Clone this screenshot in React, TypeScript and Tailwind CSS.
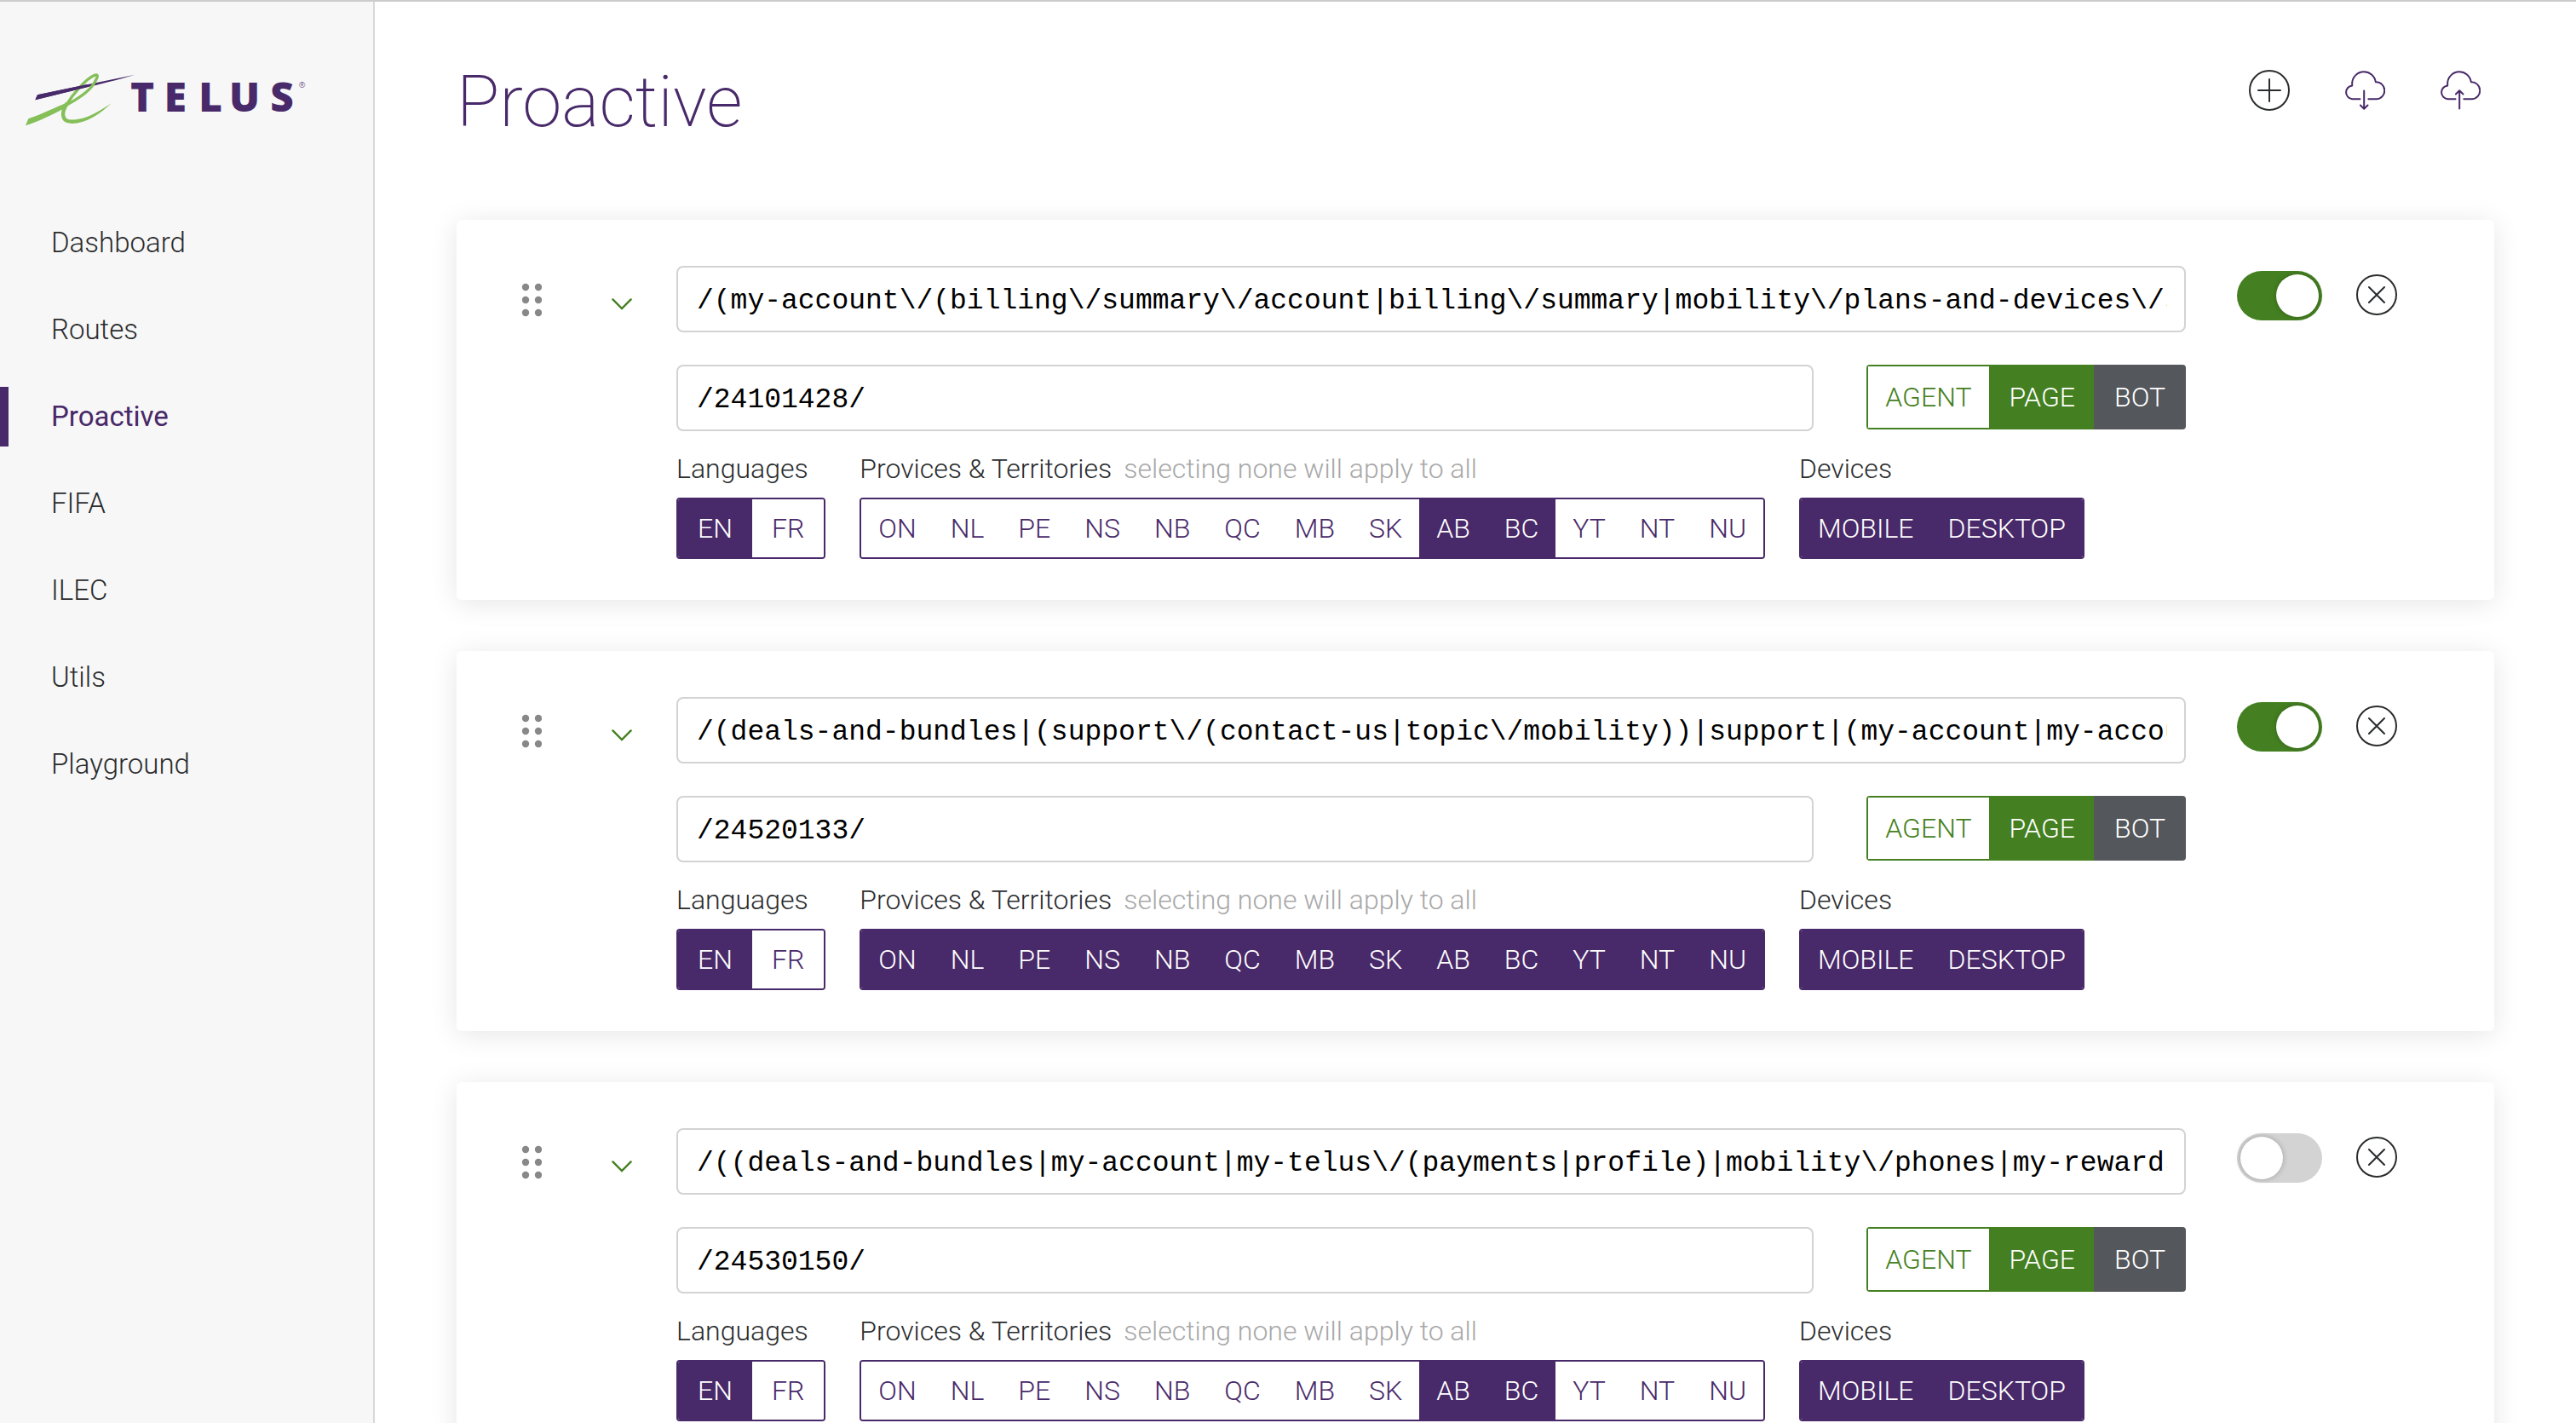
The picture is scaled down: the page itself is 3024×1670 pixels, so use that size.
import { useState } from "react";

type Rule = {
  id: string;
  pattern: string;
  engagement: string;
  provinces: string[];
  enabled: boolean;
};

const NAV = ["Dashboard", "Routes", "Proactive", "FIFA", "ILEC", "Utils", "Playground"];
const LANGUAGES = ["EN", "FR"];
const PROVINCES = ["ON", "NL", "PE", "NS", "NB", "QC", "MB", "SK", "AB", "BC", "YT", "NT", "NU"];
const DEVICES = ["MOBILE", "DESKTOP"];

const RULES: Rule[] = [
  {
    id: "rule-1",
    pattern:
      "/(my-account\\/(billing\\/summary\\/account|billing\\/summary|mobility\\/plans-and-devices\\/summary))/",
    engagement: "/24101428/",
    provinces: ["AB", "BC"],
    enabled: true,
  },
  {
    id: "rule-2",
    pattern:
      "/(deals-and-bundles|(support\\/(contact-us|topic\\/mobility))|support|(my-account|my-account\\/profile))/",
    engagement: "/24520133/",
    provinces: PROVINCES,
    enabled: true,
  },
  {
    id: "rule-3",
    pattern:
      "/((deals-and-bundles|my-account|my-telus\\/(payments|profile)|mobility\\/phones|my-rewards|support))/",
    engagement: "/24530150/",
    provinces: ["AB", "BC"],
    enabled: false,
  },
];

function TelusLogo() {
  return (
    <svg viewBox="0 0 1020 216" className="h-[72px] w-[340px]" role="img" aria-label="TELUS">
      <path d="M52 112 L60 94 L403 23 C340 42 280 56 235 67 Z" fill="#482969" />
      <g fill="none" stroke="#84bf58" strokeLinecap="round" strokeLinejoin="round">
        <path d="M150 136 C196 112 236 88 256 58 C274 30 276 20 261 25 C230 38 184 92 163 128" strokeWidth="10" />
        <path d="M163 126 C142 160 146 190 182 188" strokeWidth="13" />
      </g>
      <path d="M18 202 L28 178 C80 160 120 140 164 121 L166 134 C120 162 60 188 18 202 Z" fill="#84bf58" />
      <path d="M178 182 C230 184 280 150 320 124 C280 162 230 196 178 195 Z" fill="#84bf58" />
      <path d="M52 112 L60 94 L235 57 V67 Z" fill="#482969" />
      <text
        x="387 506 628 735 880"
        y="153"
        fill="#482969"
        className="font-['Noto_Sans'] text-[143px] font-black"
      >
        TELUS
      </text>
      <text x="980" y="70" fill="#482969" className="font-['Open_Sans'] text-[28px]">
        ®
      </text>
    </svg>
  );
}

function PlusCircle() {
  return (
    <svg viewBox="0 0 48 48" className="size-12" fill="none" stroke="#2a2c2e" strokeWidth="2" strokeLinecap="round">
      <circle cx="24" cy="24" r="23" />
      <path d="M24 11v26M11 24h26" />
    </svg>
  );
}

function CloseCircle() {
  return (
    <svg viewBox="0 0 48 48" className="size-12" fill="none" stroke="#2a2c2e" strokeWidth="2" strokeLinecap="round">
      <circle cx="24" cy="24" r="23" />
      <path d="M15 15l18 18M33 15L15 33" />
    </svg>
  );
}

function Cloud({ up }: { up: boolean }) {
  return (
    <svg
      viewBox="0 0 48 48"
      className="size-12"
      fill="none"
      stroke="#482969"
      strokeWidth="2"
      strokeLinecap="round"
      strokeLinejoin="round"
    >
      <path d="M18.5 34.3H9.2a8 8 0 0 1 0-15.9V15a13.9 13.9 0 0 1 27.6-.8a10 10 0 1 1 .8 20.1H28.3" />
      <path d={up ? "M23.2 24.5V45.5M18.9 28.5l4.3-4.2 4.3 4.2" : "M23.2 24.5V45.5M18.9 41.5l4.3 4.2 4.3-4.2"} />
    </svg>
  );
}

function ToggleGroup({
  id,
  label,
  hint,
  options,
  initial,
  padding = "px-5",
}: {
  id: string;
  label: string;
  hint?: string;
  options: string[];
  initial: string[];
  padding?: string;
}) {
  const [selected, setSelected] = useState(initial);
  const toggle = (o: string) =>
    setSelected((s) => (s.includes(o) ? s.filter((x) => x !== o) : [...s, o]));
  return (
    <div role="group" aria-labelledby={id}>
      <div className="mb-[10px] flex h-12 items-center">
        <span id={id}>{label}</span>
        {hint && <span className="ml-[14px] text-[#a8a8a8]">{hint}</span>}
      </div>
      <div className="inline-flex h-[72px] overflow-hidden rounded-sm border-2 border-[#482969]">
        {options.map((o) => (
          <button
            key={o}
            type="button"
            aria-pressed={selected.includes(o)}
            onClick={() => toggle(o)}
            className={`${padding} ${selected.includes(o) ? "bg-[#482969] text-white" : "bg-white text-[#482969]"}`}
          >
            {o}
          </button>
        ))}
      </div>
    </div>
  );
}

function RuleCard({ rule }: { rule: Rule }) {
  const [enabled, setEnabled] = useState(rule.enabled);
  return (
    <li className="flex items-start rounded-md bg-white pt-[54px] pr-[114px] pb-12 pl-[76px] shadow-[0_4px_32px_rgba(0,0,0,0.1)]">
      <button type="button" aria-label="Reorder rule" className="mt-5">
        <svg viewBox="0 0 24 40" className="h-10 w-6" fill="#888888">
          {[5, 20, 35].map((y) => (
            <g key={y}>
              <circle cx="5" cy={y} r="4.2" />
              <circle cx="20" cy={y} r="4.2" />
            </g>
          ))}
        </svg>
      </button>
      <button type="button" aria-label="Expand rule" className="mt-[38px] ml-[82px]">
        <svg viewBox="0 0 24 14" className="h-[14px] w-6" fill="none" stroke="#448021" strokeWidth="2.4" strokeLinecap="round">
          <path d="M1.4 1.4L12 12L22.6 1.4" />
        </svg>
      </button>
      <div className="ml-[52px] min-w-0 flex-1">
        <input
          aria-label="URL pattern"
          defaultValue={rule.pattern}
          className="block h-[78px] w-full rounded-lg border-2 border-[#d3d3d3] pt-1 pr-5 pl-[22px] font-['Liberation_Mono',monospace] text-[33px] font-normal text-black"
        />
        <div className="mt-[38px] flex items-start gap-[62px]">
          <input
            aria-label="Engagement ID pattern"
            defaultValue={rule.engagement}
            className="h-[78px] min-w-0 flex-1 rounded-lg border-2 border-[#d3d3d3] pt-1 pr-5 pl-[22px] font-['Liberation_Mono',monospace] text-[33px] font-normal text-black"
          />
          <div role="group" aria-label="Engagement type" className="flex h-[76px] overflow-hidden rounded-sm">
            <button type="button" className="border-2 border-[#448021] px-5 text-[#448021]">
              AGENT
            </button>
            <button type="button" className="bg-[#448021] px-[22px] text-white">
              PAGE
            </button>
            <button type="button" className="bg-[#54575b] px-6 text-white">
              BOT
            </button>
          </div>
        </div>
        <div className="mt-5 flex gap-10 whitespace-nowrap">
          <ToggleGroup
            id={`${rule.id}-lang`}
            label="Languages"
            options={LANGUAGES}
            initial={["EN"]}
            padding="px-[23px]"
          />
          <ToggleGroup
            id={`${rule.id}-prov`}
            label="Provices & Territories"
            hint="selecting none will apply to all"
            options={PROVINCES}
            initial={rule.provinces}
          />
          <ToggleGroup id={`${rule.id}-dev`} label="Devices" options={DEVICES} initial={DEVICES} />
        </div>
      </div>
      <input
        type="checkbox"
        role="switch"
        aria-label="Rule enabled"
        checked={enabled}
        onChange={(e) => setEnabled(e.target.checked)}
        className="mt-[6px] ml-[60px] flex h-[58px] w-[100px] appearance-none rounded-full bg-[#d3d3d3] p-1 before:size-[50px] before:rounded-full before:bg-white before:shadow-[0_0_6px_rgba(0,0,0,0.25)] checked:justify-end checked:bg-[#448021]"
      />
      <button type="button" aria-label="Delete rule" className="mt-[10px] ml-10">
        <CloseCircle />
      </button>
    </li>
  );
}

export default function App() {
  return (
    <div className="flex min-h-screen border-t-2 border-[#cccccc] bg-white font-[Roboto,sans-serif] text-[32px] font-light text-[#2a2c2e]">
      <aside className="w-[440px] shrink-0 border-r-2 border-[#d8d8d8] bg-[#f7f7f7]">
        <a href="#home" className="mt-[78px] ml-6 block">
          <TelusLogo />
        </a>
        <nav aria-label="Main" className="mt-[98px] flex flex-col gap-8 text-[33px]">
          {NAV.map((item) => (
            <a
              key={item}
              href={`#${item.toLowerCase()}`}
              aria-current={item === "Proactive" ? "page" : undefined}
              className={
                item === "Proactive"
                  ? "flex h-[70px] items-center border-l-[10px] border-[#482969] pl-[50px] font-normal text-[#482969]"
                  : "flex h-[70px] items-center border-l-[10px] border-transparent pl-[50px]"
              }
            >
              {item}
            </a>
          ))}
        </nav>
      </aside>
      <main className="min-w-0 flex-1 px-24 pt-[70px]">
        <header className="mb-[90px] flex items-start justify-between">
          <h1 className="text-[83px] leading-24 font-extralight text-[#482969]">Proactive</h1>
          <div className="mt-[10px] mr-4 flex gap-16">
            <button type="button" aria-label="Add rule">
              <PlusCircle />
            </button>
            <button type="button" aria-label="Download rules">
              <Cloud up={false} />
            </button>
            <button type="button" aria-label="Upload rules">
              <Cloud up />
            </button>
          </div>
        </header>
        <ul className="flex flex-col gap-[60px]">
          {RULES.map((rule) => (
            <RuleCard key={rule.id} rule={rule} />
          ))}
        </ul>
      </main>
    </div>
  );
}
